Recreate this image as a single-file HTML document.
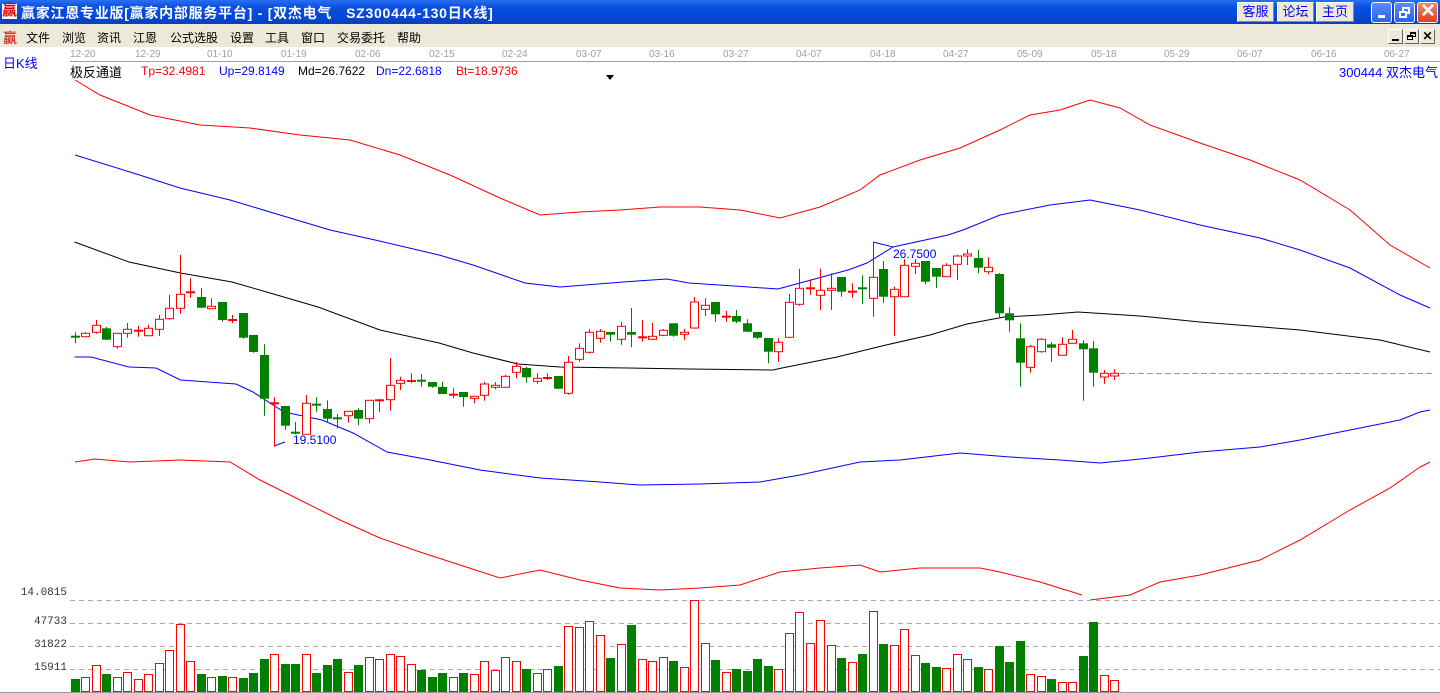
<!DOCTYPE html>
<html><head><meta charset="utf-8">
<style>
*{margin:0;padding:0;box-sizing:border-box}
body{width:1440px;height:693px;overflow:hidden;background:#fff;position:relative;font-family:"Liberation Sans","Noto Sans CJK SC",sans-serif}
.t{position:absolute;white-space:nowrap}
#title{position:absolute;left:0;top:0;width:1440px;height:24px;background:linear-gradient(#2a6ff0,#0a4fe0 30%,#0548d8 70%,#0a3fb8)}
#menu{position:absolute;left:0;top:24px;width:1440px;height:23px;background:#ECE9D8}
.btn{position:absolute;top:2px;height:20px;background:#ECE9D8;border:1px solid #fff;border-right-color:#888;border-bottom-color:#888;color:#00f;font-size:13px;text-align:center;line-height:18px}
.wb{position:absolute;top:2px;width:21px;height:21px;border:1px solid #fff;border-radius:3px;background:linear-gradient(#5a8ef8,#2a62e8)}
.mb{position:absolute;top:29px;width:15px;height:15px;background:#ECE9D8;border:1px solid #fff;border-right-color:#666;border-bottom-color:#666}
.d{position:absolute;top:49px;font-size:10px;color:#a0a0a0}
.m{position:absolute;top:29px;font-size:12px;color:#000;white-space:nowrap}
.vl{position:absolute;font-family:"Liberation Mono",monospace;font-size:11px;color:#333;text-align:right;width:67px;left:0}
</style></head><body>
<div id="title"></div>
<div class="t" style="left:2px;top:3px;font-size:15px;color:#d00;font-weight:bold;background:#fff;line-height:16px">赢</div>
<div class="t" style="left:21px;top:3px;font-size:14px;font-weight:bold;color:#fff;letter-spacing:0.75px">赢家江恩专业版[赢家内部服务平台] - [双杰电气&nbsp;&nbsp;&nbsp;SZ300444-130日K线]</div>
<div class="btn" style="left:1237px;width:37px">客服</div>
<div class="btn" style="left:1277px;width:37px">论坛</div>
<div class="btn" style="left:1316px;width:38px">主页</div>
<div class="wb" style="left:1371px"><div style="position:absolute;left:6px;top:12px;width:7px;height:3px;background:#fff"></div></div>
<div class="wb" style="left:1394px"><div style="position:absolute;left:7px;top:4px;width:8px;height:7px;border:2px solid #fff"></div><div style="position:absolute;left:4px;top:8px;width:8px;height:7px;border:2px solid #fff;background:#3a70ee"></div></div>
<div class="wb" style="left:1417px;background:linear-gradient(#f08a6a,#d84020)"><div style="position:absolute;left:1px;top:-3px;width:18px;color:#fff;font-size:19px;font-weight:bold;text-align:center">✕</div></div>
<div id="menu"></div>
<div class="t" style="left:3px;top:28px;font-size:14px;color:#c00">赢</div>
<div class="m" style="left:26px">文件</div><div class="m" style="left:62px">浏览</div><div class="m" style="left:97px">资讯</div><div class="m" style="left:133px">江恩</div><div class="m" style="left:170px">公式选股</div><div class="m" style="left:230px">设置</div><div class="m" style="left:265px">工具</div><div class="m" style="left:301px">窗口</div><div class="m" style="left:337px">交易委托</div><div class="m" style="left:397px">帮助</div>
<div class="mb" style="left:1388px"><div style="position:absolute;left:3px;top:9px;width:7px;height:2px;background:#000"></div></div>
<div class="mb" style="left:1404px"><div style="position:absolute;left:5px;top:2px;width:6px;height:5px;border:1px solid #000;border-top-width:2px"></div><div style="position:absolute;left:2px;top:5px;width:6px;height:5px;border:1px solid #000;border-top-width:2px;background:#ECE9D8"></div></div>
<div class="mb" style="left:1420px;font-size:12px;font-weight:bold;line-height:13px;text-align:center">✕</div>

<div class="d" style="left:70px">12-20</div><div class="d" style="left:135px">12-29</div><div class="d" style="left:207px">01-10</div><div class="d" style="left:281px">01-19</div><div class="d" style="left:355px">02-06</div><div class="d" style="left:429px">02-15</div><div class="d" style="left:502px">02-24</div><div class="d" style="left:576px">03-07</div><div class="d" style="left:649px">03-16</div><div class="d" style="left:723px">03-27</div><div class="d" style="left:796px">04-07</div><div class="d" style="left:870px">04-18</div><div class="d" style="left:943px">04-27</div><div class="d" style="left:1017px">05-09</div><div class="d" style="left:1091px">05-18</div><div class="d" style="left:1164px">05-29</div><div class="d" style="left:1237px">06-07</div><div class="d" style="left:1311px">06-16</div><div class="d" style="left:1384px">06-27</div>
<div style="position:absolute;left:70px;top:61px;width:1370px;height:1px;background:#a0a0a0"></div>
<div class="t" style="left:3px;top:53px;font-size:13px;color:#00f">日K线</div>
<div class="t" style="left:70px;top:62px;font-size:13px;color:#000">极反通道</div>
<div class="t" style="left:141px;top:64px;font-size:12px;color:#f00">Tp=32.4981</div>
<div class="t" style="left:219px;top:64px;font-size:12px;color:#00f">Up=29.8149</div>
<div class="t" style="left:298px;top:64px;font-size:12px;color:#000">Md=26.7622</div>
<div class="t" style="left:376px;top:64px;font-size:12px;color:#00f">Dn=22.6818</div>
<div class="t" style="left:456px;top:64px;font-size:12px;color:#f00">Bt=18.9736</div>
<div class="t" style="left:1339px;top:62px;font-size:13px;color:#00f">300444 双杰电气</div>

<div class="vl" style="top:587px">14.0815</div>
<div class="vl" style="top:616px">47733</div>
<div class="vl" style="top:639px">31822</div>
<div class="vl" style="top:662px">15911</div>

<svg id="c" width="1440" height="693" style="position:absolute;left:0;top:0" xmlns="http://www.w3.org/2000/svg">
<polygon points="606,75 614,75 610,80" fill="#000"/>
<g fill="none" stroke-width="1">
<polyline stroke="#f00" points="75,80 100,95 150,115 200,125 250,128 300,135 350,140 400,155 450,175 500,198 540,215 580,212 620,210 660,207 700,207 740,210 780,218 820,207 860,190 880,175 920,160 960,148 1000,130 1030,115 1060,110 1090,100 1120,108 1150,125 1200,143 1250,160 1300,180 1350,210 1390,245 1430,268"/>
<polyline stroke="#00f" points="75,155 130,172 180,188 230,200 280,215 330,230 375,240 439,255 473,265 525,283 560,287 623,282 667,279 689,283 734,286 778,289 800,283 848,270 867,263 893,247 948,235 963,230 1000,215 1050,205 1090,200 1140,210 1200,225 1260,238 1300,250 1350,268 1400,295 1430,308"/>
<polyline stroke="#000" points="74.5,242 129,262 180.5,273 232,282 266.6,292 318,307 380,330 439,343 473,353 518,364 560,367 689,369 773,370 782,368 837,357 886,345 930,335 967,324 1004,317 1041,315 1078,312 1140,316 1200,322 1300,330 1380,340 1430,352"/>
<polyline stroke="#00f" points="74.5,357 91,357 129,367 156,368 180.5,380 236,384 253,392 284,412 322,420 353,433 387,452 425,459 480,470 540,478 600,482 640,485 700,484 760,482 800,475 860,462 900,460 960,453 1010,457 1060,460 1100,463 1150,458 1200,452 1260,447 1300,440 1350,430 1400,420 1420,412 1430,410"/>
<polyline stroke="#f00" points="75,462 95,459 130,462 180,460 230,462 260,480 300,500 340,520 380,538 420,552 460,565 500,578 540,570 580,580 620,588 660,590 700,588 740,585 780,572 820,568 860,565 880,572 920,568 980,568 1000,572 1040,582 1082,595"/>
<polyline stroke="#f00" points="1090,600 1130,595 1160,582 1200,575 1260,560 1300,540 1350,510 1390,488 1420,467 1430,462"/>
<line x1="1120" y1="373.5" x2="1432" y2="373.5" stroke="#999" stroke-dasharray="6,3"/>
<polyline stroke="#00f" points="274,446 285,442"/>
<polyline stroke="#00f" points="873,242 893,247"/>
<g stroke="#aaa" stroke-dasharray="5,4"><line x1="70" y1="600.5" x2="1440" y2="600.5"/><line x1="70" y1="623.5" x2="1440" y2="623.5"/><line x1="70" y1="646.5" x2="1440" y2="646.5"/><line x1="70" y1="669.5" x2="1440" y2="669.5"/></g>
<line x1="0" y1="692.5" x2="1440" y2="692.5" stroke="#999"/>
</g>
<text x="293" y="444" font-family="Liberation Sans" font-size="12" fill="#00f">19.5100</text>
<text x="893" y="258" font-family="Liberation Sans" font-size="12" fill="#00f">26.7500</text>
<g id="cg"></g>
</svg>
<script>
var A=[
['g',277,290,290,310],['r',277,280,290,290],['r',240,256,277,281],['g',261,265,299,300],['r',278,280,320,326],['r',249,268,280,293],['r',257,272,272,290],['r',254,265,287,289],['r',225,238,268,288],['r',165,205,236,239],['r',45,163,205,221],['r',115,157,157,173],['g',145,171,203,203],['r',175,199,206,206],['g',186,186,240,245],['r',225,240,240,250],['g',219,219,293,296],['g',285,285,336,338],['g',313,345,476,527],['r',472,490,490,620],['g',498,498,557,570],['g',546,578,578,583],['r',465,490,583,583],['g',472,494,494,515],['g',481,507,536,548],['g',522,535,535,565],['r',514,514,527,548],['g',505,510,536,556],['r',481,481,536,550],['r',477,481,481,516],['r',354,436,479,512],['r',410,421,430,450],['r',400,423,423,430],['g',403,422,422,440],['g',426,426,440,443],['g',425,441,462,462],['r',445,464,464,475],['g',456,456,471,500],['r',469,469,475,490],['r',426,432,466,482],['r',426,436,442,448],['r',404,409,442,442],['r',366,379,397,415],['g',380,384,412,428],['r',400,415,424,431],['r',400,414,414,420],['g',408,408,446,448]];
var B=[
['r',378,397,490,494],['r',340,355,388,395],['r',298,307,367,370],['r',297,304,325,338],['g',306,306,314,335],['r',276,289,328,344],['g',234,306,314,352],['r',270,322,322,335],['r',279,319,328,330],['r',297,301,316,318],['g',280,280,317,320],['r',296,307,313,331],['r',201,216,294,296],['r',205,226,238,258],['g',216,216,253,275],['r',243,260,260,275],['g',240,258,275,280],['g',268,280,305,307],['g',306,306,323,327],['g',324,324,365,400],['r',325,337,365,395],['r',192,217,322,322],['r',116,175,223,227],['r',148,175,175,195],['r',116,181,196,240],['r',130,175,181,240],['g',141,141,185,200],['r',160,185,185,203],['g',136,175,175,222],['r',37,142,205,260],['g',93,117,200,218],['r',170,178,200,318],['r',88,106,200,200],['r',88,100,109,132],['g',93,93,155,163],['g',114,114,140,174],['r',100,106,140,140],['r',74,78,103,150],['r',58,72,78,105],['g',60,84,113,130],['r',82,112,125,133],['g',129,132,250,265],['g',232,250,271,305],['g',280,325,398,470],['r',345,350,412,428],['r',325,328,365,368],['g',337,343,353,395],['r',322,343,376,376],['r',300,328,340,340],['g',330,340,358,512],['g',333,355,428,470],['r',420,430,441,461],['r',418,430,438,450]];
var V=[679,677,665,674,677,672,679,674,663,650,624,661,674,677,676,677,678,673,659,654,664,664,654,673,665,659,672,665,657,659,654,656,664,670,677,673,677,673,674,661,670,657,661,669,673,669,666,626,627,621,635,658,644,625,659,661,657,661,667,600,643,660,672,669,671,659,666,669,633,612,643,620,645,658,662,654,611,644,645,629,655,663,667,668,654,659,667,669,646,662,641,674,676,679,682,682,656,622,675,680];
var s='',C=A.map(function(a){return [a,240]}).concat(B.map(function(b){return [b,230]}));
C.forEach(function(p,i){var a=p[0],y0=p[1],x=Math.round(74.5+i*10.5),col=a[0]=='r'?'#f00':'#008000';
function Y(v){return (y0+v/3).toFixed(1)}
var wt=Y(a[1]),bt=Y(a[2]),bb=Y(a[3]),wb=Y(a[4]);
s+='<line x1="'+(x+.5)+'" y1="'+wt+'" x2="'+(x+.5)+'" y2="'+wb+'" stroke="'+col+'"/>';
var h=bb-bt;
if(h<2){s+='<rect x="'+(x-4)+'" y="'+(bt-1)+'" width="9" height="2" fill="'+col+'"/>';}
else if(a[0]=='r'){s+='<rect x="'+(x-3.5)+'" y="'+bt+'" width="8" height="'+h.toFixed(1)+'" fill="#fff" stroke="#f00"/>';}
else{s+='<rect x="'+(x-4)+'" y="'+bt+'" width="9" height="'+h.toFixed(1)+'" fill="#008000"/>';}
var vt=V[i],vh=692-vt;
if(a[0]=='r')s+='<rect x="'+(x-3.5)+'" y="'+(vt+.5)+'" width="8" height="'+(vh-1)+'" fill="#fff" stroke="#f00"/>';
else s+='<rect x="'+(x-4)+'" y="'+vt+'" width="9" height="'+vh+'" fill="#008000"/>';
});
document.getElementById('cg').innerHTML=s;
</script>
</body></html>
